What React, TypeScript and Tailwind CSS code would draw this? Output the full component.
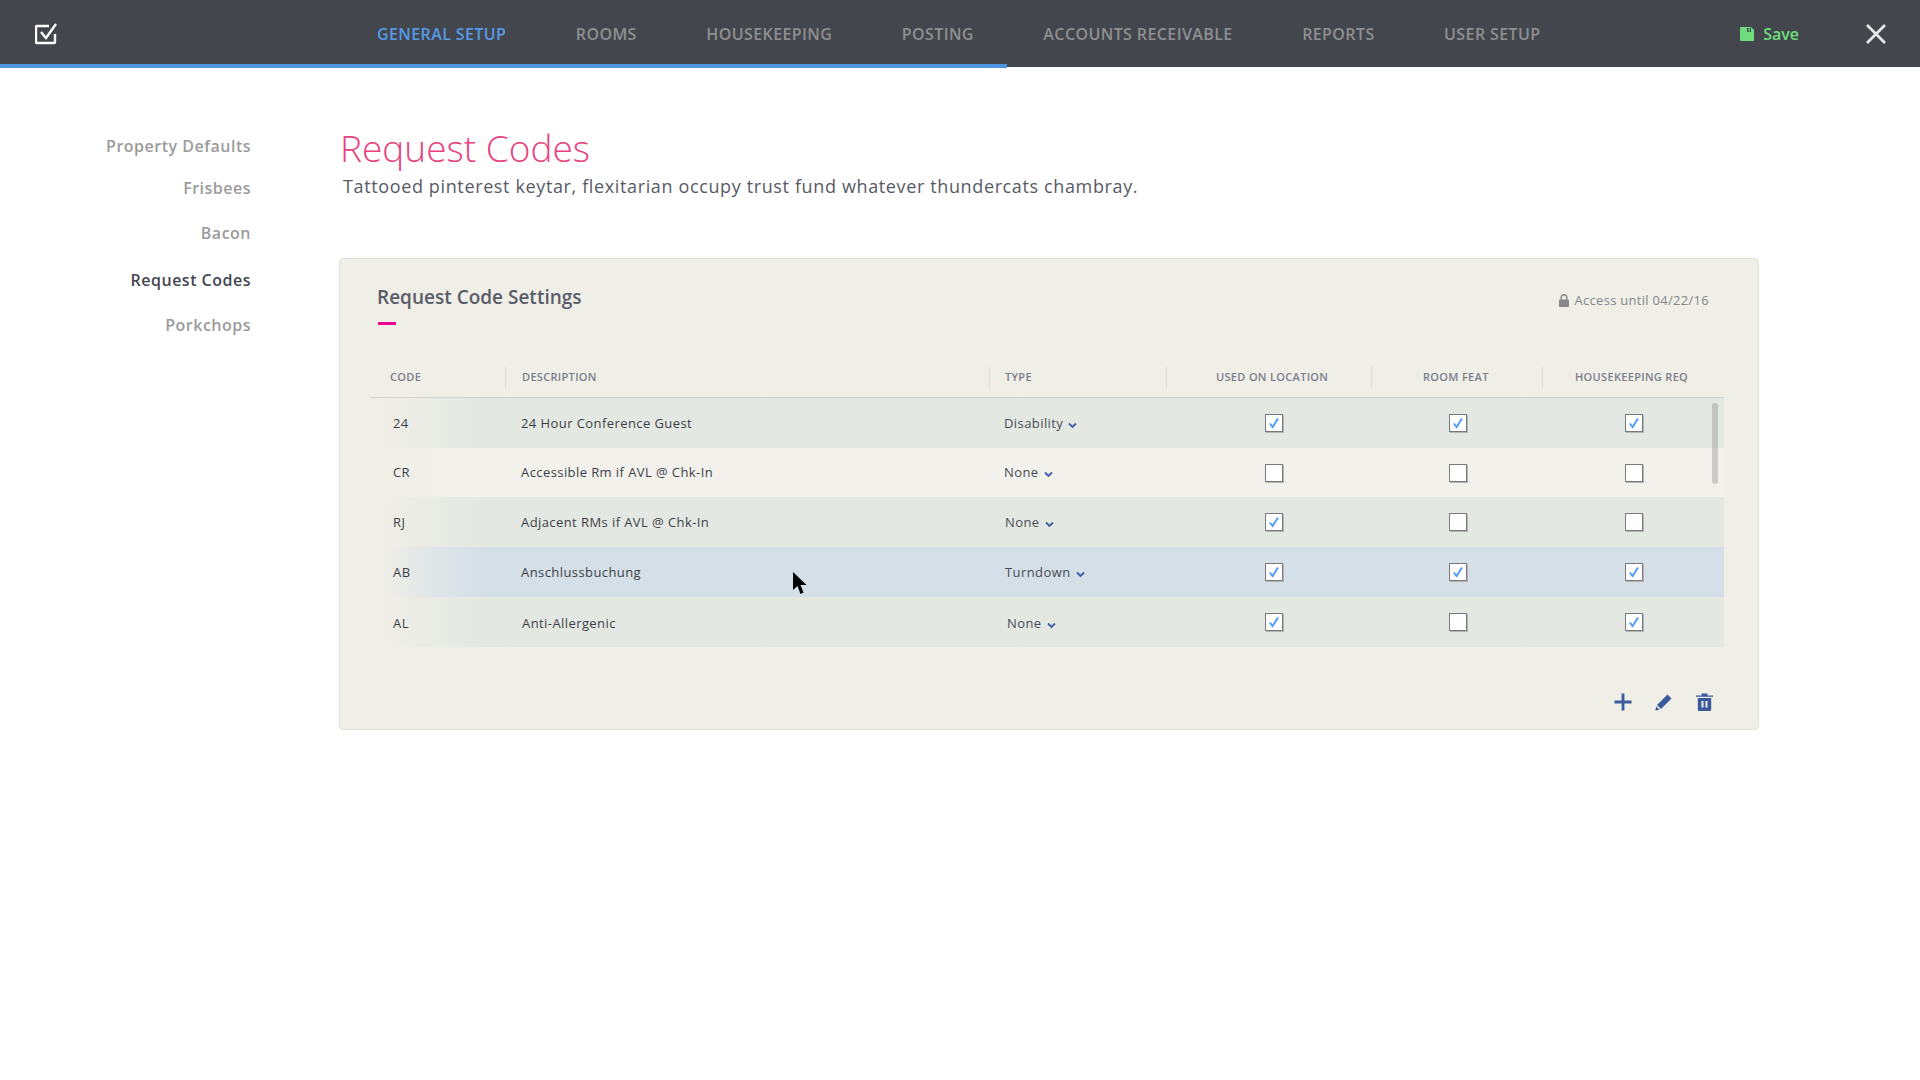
const NAV = ["General Setup", "Rooms", "Housekeeping", "Posting", "Accounts Receivable", "Reports", "User Setup"];

const SIDE = [
  { label: "Property Defaults", className: "mt-0" },
  { label: "Frisbees", className: "mt-[20px]" },
  { label: "Bacon", className: "mt-[23px]" },
  { label: "Request Codes", className: "mt-[25px] text-[#44464e]" },
  { label: "Porkchops", className: "mt-[23px]" },
];

const ROW_GRID = "grid grid-cols-[135px_484px_177px_205px_171px_182px]";

const ROWS = [
  { code: "24", desc: "24 Hour Conference Guest", descClass: "pl-[16px]", type: "Disability", typeClass: "pl-[15px]", checks: [true, true, true], bg: "from-[#efeee7] to-[#e4e8e3]", h: "h-[50px]", nudge: "pt-[2px]" },
  { code: "CR", desc: "Accessible Rm if AVL @ Chk-In", descClass: "pl-[16px]", type: "None", typeClass: "pl-[15px]", checks: [false, false, false], bg: "from-[#efeee7] to-[#f2f1ec]", h: "h-[49px]", nudge: "pt-[1px]" },
  { code: "RJ", desc: "Adjacent RMs if AVL @ Chk-In", descClass: "pl-[16px]", type: "None", typeClass: "pl-[16px]", checks: [true, false, false], bg: "from-[#efeee7] to-[#e4e8e3]", h: "h-[50px]", nudge: "pt-[1px]" },
  { code: "AB", desc: "Anschlussbuchung", descClass: "pl-[16px]", type: "Turndown", typeClass: "pl-[16px]", checks: [true, true, true], bg: "from-[#efeee7] to-[#d4dfe8]", h: "h-[50px]", nudge: "pt-[1px]" },
  { code: "AL", desc: "Anti-Allergenic", descClass: "pl-[17px]", type: "None", typeClass: "pl-[18px]", checks: [true, false, true], bg: "from-[#efeee7] to-[#e4e8e3]", h: "h-[50px]", nudge: "pt-[3px]" },
];

const CHECK_PADDING = ["pl-[99px]", "pl-[78px]", "pl-[83px]"];

function Chevron() {
  return (
    <svg width="9" height="7" viewBox="0 0 9 7" className="ml-[5px] mt-[3px]">
      <path d="M1 1.5 L4.5 5 L8 1.5" fill="none" stroke="#3d5ea6" strokeWidth="1.8" />
    </svg>
  );
}

function Check({ on }: { on: boolean }) {
  return (
    <div className="flex h-[18px] w-[18px] items-center justify-center border border-[#77797c] bg-white shadow-[1px_1px_0_#b5b5b0]">
      {on ? (
        <svg width="12" height="12" viewBox="0 0 12 12">
          <path d="M1.8 6.5 L4.6 10 L10 1.5" fill="none" stroke="#4f9df5" strokeWidth="1.9" />
        </svg>
      ) : null}
    </div>
  );
}

function HeaderCell({ className, children }: { className: string; children: string }) {
  return (
    <div className={`flex h-[21px] items-center border-l border-[#d9dad6] text-[11px] font-semibold tracking-[0.32px] text-[#7c808c] ${className}`}>
      {children}
    </div>
  );
}

export default function App() {
  return (
    <div className="relative min-h-[1080px] bg-white font-['Open_Sans',sans-serif]">
      <header className="relative flex h-[67px] items-center bg-[#43464c]">
        <svg width="24" height="22" viewBox="0 0 24 22" className="ml-[35px]">
          <path d="M14 3 H2 a1 1 0 0 0 -1 1 V19 a1 1 0 0 0 1 1 H19 a1 1 0 0 0 1 -1 V11" fill="none" stroke="#fff" strokeWidth="2.4" />
          <path d="M6 9 L11 15 L21 1" fill="none" stroke="#fff" strokeWidth="2.4" />
        </svg>
        <nav className="ml-[318px] flex items-center gap-[69.5px]">
          {NAV.map((item, i) => (
            <span
              key={item}
              className={`text-[16px] font-semibold uppercase tracking-[0.4px] ${i === 0 ? "text-[#559ae8]" : "text-[#8e8f90]"}`}
            >
              {item}
            </span>
          ))}
        </nav>
        <div className="ml-auto flex items-center">
          <svg width="14" height="14" viewBox="0 0 14 14">
            <path d="M1 0 H11 L14 3 V13 a1 1 0 0 1 -1 1 H1 a1 1 0 0 1 -1 -1 V1 a1 1 0 0 1 1 -1 Z" fill="#6fdc7d" />
            <rect x="7" y="1" width="4" height="4" fill="#43464c" />
            <rect x="8.5" y="1.5" width="1.5" height="3" fill="#6fdc7d" />
          </svg>
          <span className="ml-[9px] text-[16px] font-semibold text-[#6fdc7d]">Save</span>
          <svg width="20" height="20" viewBox="0 0 20 20" className="ml-[67px] mr-[34px]">
            <path d="M1 1 L19 19 M19 1 L1 19" stroke="#e8e8e8" strokeWidth="2.8" />
          </svg>
        </div>
        <div className="absolute left-0 top-[64px] h-[4px] w-[1007px] bg-[#4f94e0]" />
      </header>

      <main className="flex">
        <aside className="mt-[68px] w-[251px] text-right text-[16px] font-semibold tracking-[0.5px] text-[#9b9b9b]">
          {SIDE.map((s) => (
            <div key={s.label} className={`leading-[22px] ${s.className}`}>
              {s.label}
            </div>
          ))}
        </aside>

        <section className="ml-[88px] mt-[55px] w-[1420px]">
          <h1 className="ml-[1px] text-[37px] font-light leading-[52px] text-[#e8437f]">Request Codes</h1>
          <p className="ml-[4px] mt-0 text-[18px] leading-[24px] tracking-[0.63px] text-[#575a66]">
            Tattooed pinterest keytar, flexitarian occupy trust fund whatever thundercats chambray.
          </p>

          <div className="relative mt-[60px] h-[472px] rounded-[4px] border border-[#e2e1d9] bg-[#efeee7]">
            <div className="flex items-start justify-between pl-[37px] pr-[49px] pt-[25px]">
              <div>
                <h2 className="text-[19px] font-semibold leading-[26px] text-[#5a5d69]">Request Code Settings</h2>
                <div className="ml-[1px] mt-[12px] h-[3px] w-[18px] bg-[#ec008c]" />
              </div>
              <div className="mt-[7px] flex items-center text-[13px] tracking-[0.29px] text-[#85878a]">
                <svg width="10" height="13" viewBox="0 0 10 13">
                  <path d="M2.2 6 V3.6 a2.8 2.8 0 0 1 5.6 0 V6" fill="none" stroke="#85878a" strokeWidth="1.4" />
                  <rect x="0" y="5.5" width="10" height="7.5" rx="1" fill="#85878a" />
                </svg>
                <span className="ml-[6px]">Access until 04/22/16</span>
              </div>
            </div>

            <div className="ml-[30px] mt-[42px] w-[1354px]">
              <div className={`${ROW_GRID} h-[31px] border-b border-[#d2d3ce] pb-[9px]`}>
                <div className="flex h-[21px] items-center pl-[20px] text-[11px] font-semibold tracking-[0.32px] text-[#7c808c]">CODE</div>
                <HeaderCell className="pl-[16px]">DESCRIPTION</HeaderCell>
                <HeaderCell className="pl-[15px]">TYPE</HeaderCell>
                <HeaderCell className="pl-[49px]">USED ON LOCATION</HeaderCell>
                <HeaderCell className="pl-[51px]">ROOM FEAT</HeaderCell>
                <HeaderCell className="pl-[32px]">HOUSEKEEPING REQ</HeaderCell>
              </div>

              {ROWS.map((row) => (
                <div
                  key={row.code}
                  className={`${ROW_GRID} ${row.h} items-center bg-gradient-to-r from-[1%] to-[8%] text-[13px] tracking-[0.42px] text-[#3d3f47] ${row.bg}`}
                >
                  <div className={`pl-[23px] ${row.nudge}`}>{row.code}</div>
                  <div className={`${row.descClass} ${row.nudge}`}>{row.desc}</div>
                  <div className={`flex items-center ${row.typeClass} ${row.nudge}`}>
                    <span className="text-[#4a4c55]">{row.type}</span>
                    <Chevron />
                  </div>
                  {row.checks.map((on, i) => (
                    <div key={i} className={CHECK_PADDING[i]}>
                      <Check on={on} />
                    </div>
                  ))}
                </div>
              ))}
            </div>

            <div className="absolute left-[1372px] top-[144px] h-[81px] w-[6px] rounded-[3px] bg-[#6f716d]/30" />

            <div className="mt-[46px] flex items-center pl-[1274px]">
              <svg width="18" height="18" viewBox="0 0 18 18">
                <path d="M9 0.5 V17.5 M0.5 9 H17.5" stroke="#3a5a9b" strokeWidth="2.8" />
              </svg>
              <svg width="17" height="17" viewBox="0 0 17 17" className="ml-[23px]">
                <path d="M12.5 0.5 L16.5 4.5 L6 15 L2 11 Z" fill="#3a5a9b" />
                <path d="M1.2 12.5 L4.5 15.8 L0.4 16.6 Z" fill="#3a5a9b" />
              </svg>
              <svg width="17" height="18" viewBox="0 0 17 18" className="ml-[24px]">
                <path d="M0 2.5 H17 V3.8 H0 Z M5.5 0.5 H11.5 V2.5 H5.5 Z" fill="#3a5a9b" />
                <path fillRule="evenodd" d="M1.8 5 H15.2 V16.5 a1.5 1.5 0 0 1 -1.5 1.5 H3.3 a1.5 1.5 0 0 1 -1.5 -1.5 Z M5.5 8 V14.5 H7.5 V8 Z M9.5 8 V14.5 H11.5 V8 Z" fill="#3a5a9b" />
              </svg>
            </div>
          </div>
        </section>
      </main>

      <svg width="16" height="25" viewBox="0 0 16 25" className="absolute left-[792px] top-[571px]">
        <path d="M1 1 L1 19 L5.5 15 L8.5 23 L11.5 21.5 L8.5 14 L14.5 14 Z" fill="#000" />
      </svg>
    </div>
  );
}
